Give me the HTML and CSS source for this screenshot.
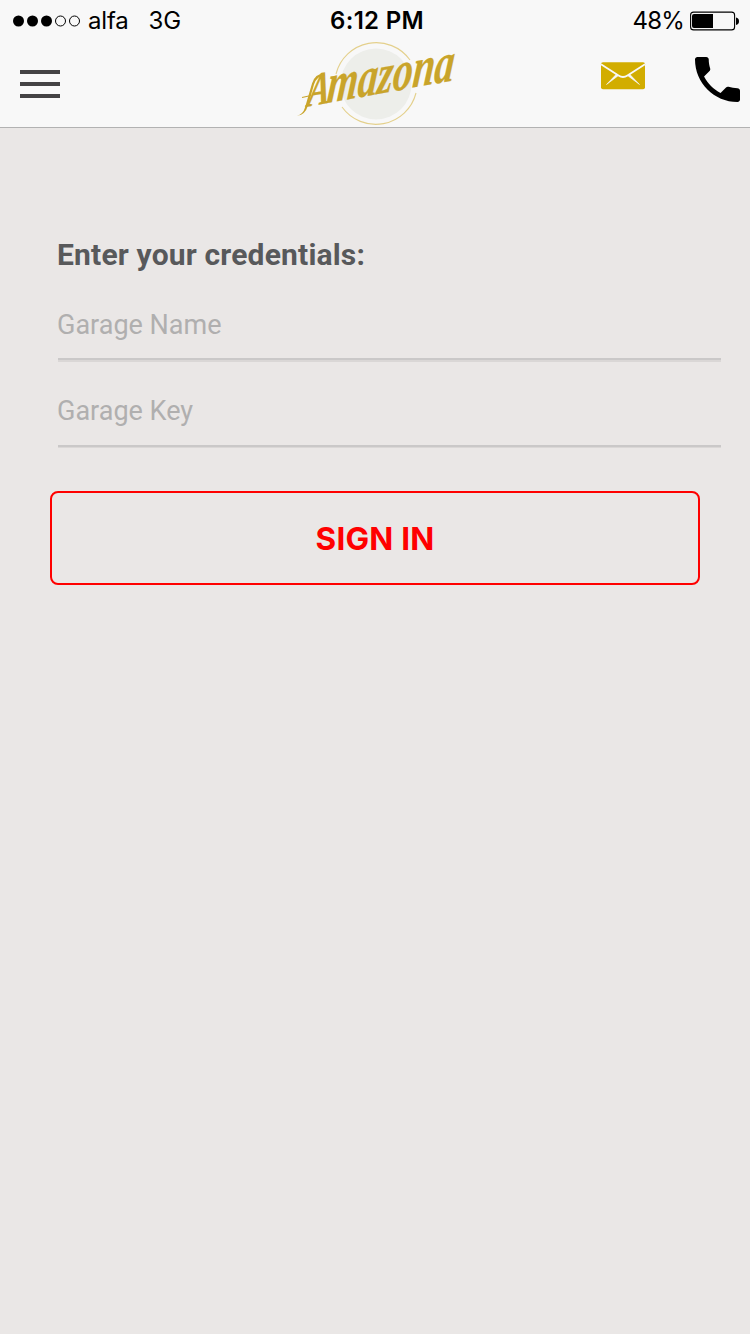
FILE: index.html
```html
<!DOCTYPE html>
<html lang="en">
<head>
<meta charset="utf-8">
<title>Amazona</title>
<link rel="stylesheet" href="styles.css">
</head>
<body>
<header class="header">
  <div class="status">
    <div class="status-left">
      <svg class="signal" width="68" height="12" viewBox="0 0 68 12"><circle cx="5.5" cy="6" r="5.5"/><circle cx="19.5" cy="6" r="5.5"/><circle cx="33.5" cy="6" r="5.5"/><g fill="none" stroke="#000"><circle cx="47.5" cy="6" r="5"/><circle cx="61.5" cy="6" r="5"/></g></svg>
      <span class="carrier">alfa</span>
      <span class="network">3G</span>
    </div>
    <span class="time">6:12 PM</span>
    <div class="status-right">
      <span class="percent">48%</span>
      <svg class="battery" width="50" height="20" viewBox="0 0 50 20"><rect x=".6" y="1.1" width="44" height="17.8" rx="3" fill="none" stroke="#000" stroke-width="1.1"/><path d="M4 3h19v14H4a2 2 0 0 1-2-2V5a2 2 0 0 1 2-2zM46 6.500q3 .5 3 3.700t-3 3.700z"/></svg>
    </div>
  </div>
  <nav class="nav">
    <div class="nav-left">
      <div class="menu"><i class="bar"></i><i class="bar"></i><i class="bar"></i></div>
    </div>
    <svg class="logo" width="200" height="86" viewBox="275 41 200 86">
      <circle cx="376" cy="84" r="35.5" fill="#edeeea"/>
      <path d="M336 74A41.5 41.5 0 0 1 410 60M416 93A41.5 41.5 0 0 1 342 107" fill="none" stroke="#e4d08c" stroke-width="1.1"/>
      <g transform="matrix(1 -.18 -.1 1 305 107)" fill="#c9a42a" stroke="#c9a42a" stroke-width=".3">
        <text class="logo-text" x="2" y="0" font-size="48" textLength="22" lengthAdjust="spacingAndGlyphs">A</text>
        <text class="logo-text" x="21" y="0" font-size="57" textLength="127" lengthAdjust="spacingAndGlyphs">mazona</text>
      </g>
      <path d="M297 115.500q6-1 8-8l7-24q3-10 12-10l1 2q-8 0-11 9l-6 21q-3 10-11 10z" fill="#c9a42a"/>
      <path d="M302 97.500l9-2" fill="none" stroke="#c9a42a" stroke-width="1.200"/>
    </svg>
    <div class="nav-right">
      <svg class="mail" width="44" height="28" viewBox="0 0 44 28"><rect y=".3" width="44" height="27" rx="2" fill="#d2ad00"/><path d="M0 2.200L17.500 13.500Q22 16.500 26.500 13.500L44 2.200" fill="none" stroke="#f8f8f8" stroke-width="1.8"/><path d="M15.500 12L5.500 22.500L17.500 13.500zM28.500 12L38.500 22.500L26.500 13.500z" fill="#f8f8f8" stroke="#f8f8f8" stroke-width=".6"/></svg>
      <svg class="phone" width="45" height="45" viewBox="3 3 18 18"><path d="M6.620 10.790c1.440 2.830 3.760 5.140 6.590 6.590l2.200-2.200c.27-.27.67-.36 1.020-.24 1.120.37 2.330.57 3.570.57.55 0 1 .45 1 1V20c0 .55-.45 1-1 1-9.390 0-17-7.610-17-17 0-.55.45-1 1-1h3.500c.55 0 1 .45 1 1 0 1.250.2 2.450.57 3.570.11.35.03.74-.25 1.020l-2.200 2.200z"/></svg>
    </div>
  </nav>
</header>
<main class="main">
  <h1 class="title">Enter your credentials:</h1>
  <div class="field first"><span class="placeholder">Garage Name</span></div>
  <div class="field second"><span class="placeholder">Garage Key</span></div>
  <button class="sign-in">SIGN IN</button>
</main>
</body>
</html>
```
FILE: styles.css
```css
* { box-sizing: border-box; }
body { margin: 0; min-height: 1334px; background: #eae7e6; font-family: Inter, "Liberation Sans", sans-serif; color: #000; }
svg { display: block; flex: none; overflow: visible; }
.header { height: 128px; background: #f8f8f8; border-bottom: 1px solid #b2b2b2; }
.status { height: 41px; display: grid; grid-template-columns: 1fr auto 1fr; align-items: center; padding: 0 10px 0 13px; font-size: 24px; line-height: 41px; white-space: nowrap; }
.status-left, .status-right { display: flex; align-items: center; }
.status-right { justify-content: flex-end; gap: 6px; }
.carrier { margin-left: 7px; letter-spacing: -.2px; }
.network { margin-left: 20px; }
.percent { letter-spacing: -.8px; }
.time { font-weight: 600; letter-spacing: .3px; padding-left: 1px; }
.nav { height: 86px; display: grid; grid-template-columns: 275px 200px 275px; align-items: start; }
.menu { margin: 29px 0 0 20px; width: 40px; display: flex; flex-direction: column; gap: 8px; }
.bar { height: 4px; background: #444244; }
.logo-text { font-family: "Liberation Serif", serif; font-weight: 700; font-style: italic; }
.nav-right { display: flex; align-items: flex-start; padding: 16px 10px 0 0; justify-content: flex-end; gap: 50px; }
.mail { margin-top: 5px; }
.main { padding: 108px 29px 0 57px; font-family: Roboto, sans-serif; }
.title { margin: 0; height: 38px; line-height: 38px; font-size: 30px; font-weight: 700; color: #58595b; letter-spacing: .18px; white-space: nowrap; }
.field { margin-left: 1px; border-bottom: 2px solid #cac8c8; box-shadow: 0 2px 0 #dad7d6; color: #b0afaf; font-size: 27px; line-height: 34px; }
.first { margin-top: 34px; height: 52px; }
.second { margin-top: 35px; height: 52px; box-shadow: 0 1px 0 #dad7d6; line-height: 32px; }
.placeholder { margin-left: -1px; }
.sign-in { display: block; width: 650px; height: 94px; margin: 44px 0 0 -7px; padding: 1px 0 0; border: 2px solid #f00; border-radius: 8px; background: none; color: #f00; font: 700 31.5px Inter, sans-serif; letter-spacing: .2px; }
```
